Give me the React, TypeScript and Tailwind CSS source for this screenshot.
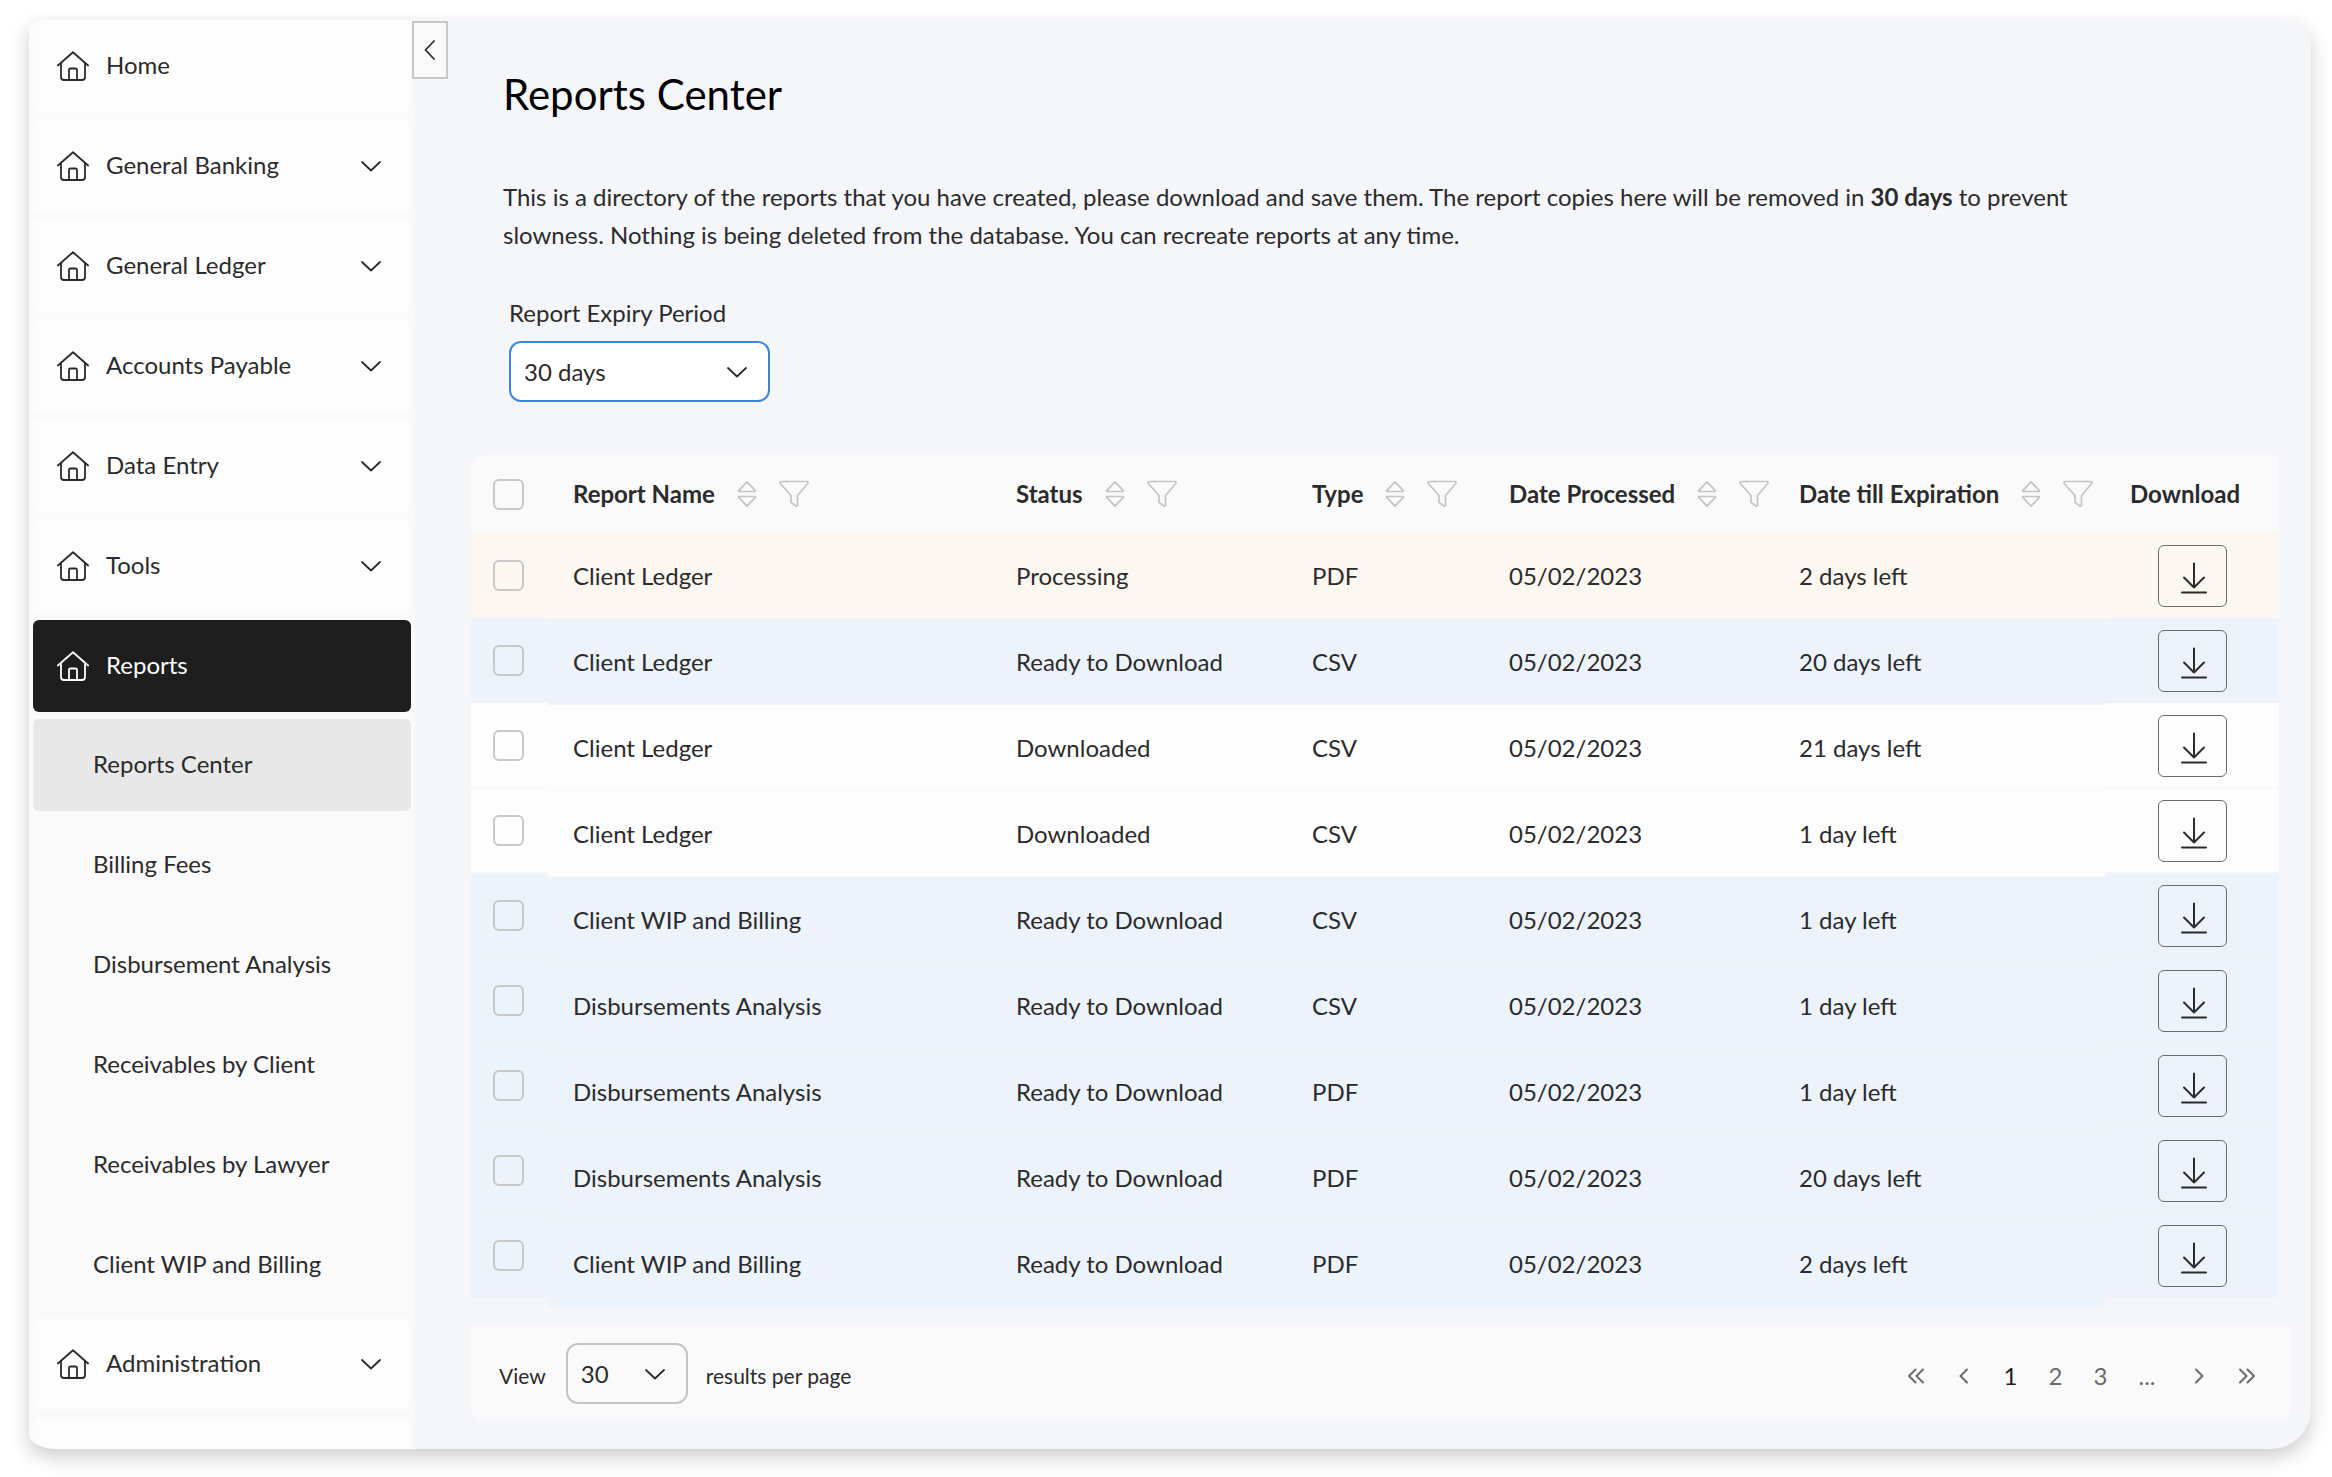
import React from "react";

const HomeIcon = () => (
  <svg className="h-8 w-8 shrink-0" viewBox="0 0 32 32" fill="none" stroke="currentColor" strokeWidth="1.8" strokeLinecap="round" strokeLinejoin="round" aria-hidden="true">
    <path d="M0.9 15.5 16 2.200 31.100 15.500" />
    <path d="M4 13V27a3 3 0 0 0 3 3h18a3 3 0 0 0 3-3V13" />
    <path d="M12 30V20a1.500 1.500 0 0 1 1.500-1.500h5A1.500 1.500 0 0 1 20 20v10" />
  </svg>
);

const ChevronDown = ({ className = "" }: { className?: string }) => (
  <svg className={"h-5 w-5 shrink-0 " + className} viewBox="0 0 20 20" fill="none" stroke="currentColor" strokeWidth="1.8" strokeLinecap="round" strokeLinejoin="round" aria-hidden="true">
    <path d="M1 6l9 8.500L19 6" />
  </svg>
);

const SortIcon = () => (
  <svg className="h-7 w-5" viewBox="0 0 20 28" fill="none" stroke="currentColor" strokeWidth="1.700" strokeLinejoin="round" aria-hidden="true">
    <path d="M10 1.800 18.300 10.600q.4.9-.6.9H2.300q-1 0-.6-.9z" />
    <path d="M10 26.200 18.300 17.400q.4-.9-.6-.9H2.300q-1 0-.6.9z" />
  </svg>
);

const FilterIcon = () => (
  <svg className="h-7 w-[30px]" viewBox="0 0 30 28" fill="none" stroke="currentColor" strokeWidth="1.700" strokeLinejoin="round" aria-hidden="true">
    <path d="M2 1.500h26q1.600.6.600 2.300L18.500 15.500V25q-.3 1.500-1.800.900l-4-3q-.7-.6-.7-1.400v-6L1.400 3.800Q.400 2.100 2 1.500z" />
  </svg>
);

const DownloadIcon = () => (
  <svg className="h-8 w-7" viewBox="0 0 28 32" fill="none" stroke="currentColor" strokeWidth="2" strokeLinecap="round" strokeLinejoin="round" aria-hidden="true">
    <path d="M14 1.500v24M4 15.500l10 10 10-10M2 30.500h24" />
  </svg>
);

const topItems = [
  { label: "General Banking" },
  { label: "General Ledger" },
  { label: "Accounts Payable" },
  { label: "Data Entry" },
  { label: "Tools" },
];

const subItems = ["Reports Center", "Billing Fees", "Disbursement Analysis", "Receivables by Client", "Receivables by Lawyer", "Client WIP and Billing"];

const NavItem = ({ label, chevron, active }: { label: string; chevron?: boolean; active?: boolean }) => (
  <li>
    <button type="button" className={"flex h-[92px] w-full items-center rounded-md pr-[30px] pl-6 text-left " + (active ? "bg-[#1e1e1e] text-white" : "bg-[#fdfdfd]")}>
      <HomeIcon />
      <span className="ml-[17px] flex-1 pb-0.5">{label}</span>
      {chevron && <ChevronDown />}
    </button>
  </li>
);

const rows = [
  ["Client Ledger", "Processing", "PDF", "05/02/2023", "2 days left"],
  ["Client Ledger", "Ready to Download", "CSV", "05/02/2023", "20 days left"],
  ["Client Ledger", "Downloaded", "CSV", "05/02/2023", "21 days left"],
  ["Client Ledger", "Downloaded", "CSV", "05/02/2023", "1 day left"],
  ["Client WIP and Billing", "Ready to Download", "CSV", "05/02/2023", "1 day left"],
  ["Disbursements Analysis", "Ready to Download", "CSV", "05/02/2023", "1 day left"],
  ["Disbursements Analysis", "Ready to Download", "PDF", "05/02/2023", "1 day left"],
  ["Disbursements Analysis", "Ready to Download", "PDF", "05/02/2023", "20 days left"],
  ["Client WIP and Billing", "Ready to Download", "PDF", "05/02/2023", "2 days left"],
];

const rowTone: Record<string, string> = {
  Processing: "bg-[#fcf7f0] shadow-[inset_0_-1px_0_#f5f6f9]",
  "Ready to Download": "bg-[#ecf3fb] shadow-[inset_0_-1px_0_#f0f4fa]",
  Downloaded: "bg-[#fdfdfd] shadow-[inset_0_-1px_0_#f6f7f9]",
};

const columns = [
  { label: "Report Name", width: "w-[468px]", pad: "pl-[25px]" },
  { label: "Status", width: "w-[296px]", pad: "" },
  { label: "Type", width: "w-[197px]", pad: "" },
  { label: "Date Processed", width: "w-[290px]", pad: "" },
  { label: "Date till Expiration", width: "", pad: "" },
];

const CheckBox = ({ label }: { label: string }) => (
  <input type="checkbox" aria-label={label} className="ml-[22px] block h-[31px] w-[31px] appearance-none rounded-md border-2 border-[#c8c8c8] bg-transparent checked:bg-[#1e1e1e]" />
);

const ReportsTable = () => (
  <div className="mt-[53px] mr-8 flex items-start overflow-hidden rounded-tl-xl">
    <table className="w-[77px] table-fixed border-collapse">
      <thead>
        <tr className="h-[78px] bg-[#fafafa]">
          <th scope="col"><CheckBox label="Select all reports" /></th>
        </tr>
      </thead>
      <tbody>
        {rows.map((r, i) => (
          <tr key={i} className={"h-[85px] " + rowTone[r[1]]}>
            <td><CheckBox label={`Select ${r[0]}, row ${i + 1}`} /></td>
          </tr>
        ))}
      </tbody>
    </table>
    <table className="min-w-0 flex-1 table-fixed border-collapse">
      <thead>
        <tr className="h-[78px] bg-[#fafafa]">
          {columns.map((c) => (
            <th key={c.label} scope="col" className={"text-left font-bold whitespace-nowrap " + c.width + " " + c.pad}>
              <span className="flex items-center">
                {c.label}
                <button type="button" aria-label={`Sort by ${c.label}`} className="ml-[22px] text-[#c4c4c4]"><SortIcon /></button>
                <button type="button" aria-label={`Filter ${c.label}`} className="ml-[22px] text-[#c4c4c4]"><FilterIcon /></button>
              </span>
            </th>
          ))}
        </tr>
      </thead>
      <tbody>
        {rows.map((r, i) => (
          <tr key={i} className={"h-[86px] " + rowTone[r[1]]}>
            {r.map((cell, j) => (
              <td key={j} className={columns[j].pad}>{cell}</td>
            ))}
          </tr>
        ))}
      </tbody>
    </table>
    <table className="w-[174px] table-fixed border-collapse">
      <thead>
        <tr className="h-[78px] bg-[#fafafa]">
          <th scope="col" className="pl-[25px] text-left font-bold">Download</th>
        </tr>
      </thead>
      <tbody>
        {rows.map((r, i) => (
          <tr key={i} className={"h-[85px] " + rowTone[r[1]]}>
            <td className="pl-[53px]">
              <button type="button" aria-label={`Download ${r[0]}, row ${i + 1}`} className="flex h-[62px] w-[69px] items-center justify-center rounded-md border border-[#6b6b6b] pt-[5px] pl-[3px]">
                <DownloadIcon />
              </button>
            </td>
          </tr>
        ))}
      </tbody>
    </table>
  </div>
);

const Select = ({ id, options, className }: { id: string; options: string[]; className: string }) => (
  <span className="relative inline-flex items-center">
    <select id={id} className={"h-[61px] appearance-none rounded-xl " + className}>
      {options.map((o) => <option key={o}>{o}</option>)}
    </select>
    <ChevronDown className="pointer-events-none absolute right-[23px]" />
  </span>
);

const PageArrow = ({ label, d, className }: { label: string; d: string; className: string }) => (
  <button type="button" aria-label={label} className={className}>
    <svg className="h-4 w-4" viewBox="0 0 16 16" fill="none" stroke="currentColor" strokeWidth="2" strokeLinecap="round" strokeLinejoin="round" aria-hidden="true">
      <path d={d} />
    </svg>
  </button>
);

const Pagination = () => (
  <footer className="mr-5 mt-5 flex h-[93px] items-center rounded-b-xl bg-[#fafafa] pr-9 pl-7">
    <label htmlFor="page-size" className="pt-1 text-[21px]">View</label>
    <span className="ml-5 flex"><Select id="page-size" options={["30", "50", "100"]} className="w-[122px] border-2 border-[#c4c4c4] bg-transparent pl-[13px]" /></span>
    <span className="ml-[18px] pt-1 text-[21px]">results per page</span>
    <nav aria-label="Pagination" className="ml-auto flex items-center pt-1 text-[#6b6b6b]">
      <PageArrow label="First page" className="mr-8" d="M7.500 1.500 1 8l6.500 6.500M15 1.500 8.500 8l6.500 6.500" />
      <PageArrow label="Previous page" className="mr-4" d="M11 1.500 4.500 8l6.500 6.500" />
      <button type="button" aria-current="page" className="w-[45px] text-[#1e1e1e]">1</button>
      <button type="button" className="w-[45px]">2</button>
      <button type="button" className="w-[45px]">3</button>
      <span className="w-12 text-center">...</span>
      <PageArrow label="Next page" className="mr-8 ml-5" d="M5 1.500 11.500 8 5 14.500" />
      <PageArrow label="Last page" className="" d="M1 1.500 7.500 8 1 14.500M8.500 1.500 15 8l-6.500 6.500" />
    </nav>
  </footer>
);

export default function App() {
  return (
    <div className="flex min-h-screen bg-white pt-5 pr-[21px] pb-7 pl-[29px] font-['Lato',sans-serif] text-[24px] leading-[30px] text-[#2b2b2b]">
      <div className="flex flex-1 overflow-hidden rounded-tl-lg rounded-tr-3xl rounded-br-[40px] bg-[#f4f6fa] shadow-[0_8px_20px_rgba(0,0,0,0.2)] [border-bottom-left-radius:28px_15px]">
        <aside className="flex w-[386px] shrink-0 flex-col bg-[#fafafa] px-1">
          <ul className="flex flex-col gap-2">
            <NavItem label="Home" />
            {topItems.map((t) => <NavItem key={t.label} label={t.label} chevron />)}
            <NavItem label="Reports" active />
          </ul>
          <ul className="my-[7px] flex flex-col gap-2">
            {subItems.map((s, i) => (
              <li key={s}>
                <a href="#" className={"flex h-[92px] items-center rounded-md pb-0.5 pl-[60px] " + (i === 0 ? "bg-[#e8e8e8]" : "")}>{s}</a>
              </li>
            ))}
          </ul>
          <ul className="flex flex-1 flex-col gap-2">
            <NavItem label="Administration" chevron />
            <li className="flex-1 rounded-t-md bg-[#fdfdfd]" />
          </ul>
        </aside>
        <main className="relative min-w-0 flex-1 pl-14">
          <button type="button" aria-label="Collapse menu" className="absolute top-px -left-[3px] flex h-[58px] w-9 items-center justify-center border-2 border-[#c8c8c8] bg-[#fafafa]">
            <svg className="h-5 w-3" viewBox="0 0 12 20" fill="none" stroke="currentColor" strokeWidth="1.800" strokeLinecap="round" strokeLinejoin="round" aria-hidden="true">
              <path d="M10 1 1.500 10 10 19" />
            </svg>
          </button>
          <header className="pl-8">
            <h1 className="pt-[46px] text-[42px] leading-[56px] text-black">Reports Center</h1>
            <p className="mt-[56px] max-w-[1620px] leading-[38px]">
              This is a directory of the reports that you have created, please download and save them. The report copies here will be removed in <strong className="font-bold">30 days</strong> to prevent slowness. Nothing is being deleted from the database. You can recreate reports at any time.
            </p>
            <div className="mt-[44px] flex flex-col items-start gap-[13px] pl-1.5">
              <label htmlFor="expiry">Report Expiry Period</label>
              <Select id="expiry" options={["30 days", "60 days", "90 days"]} className="w-[261px] border-2 border-[#3b86dc] bg-white pl-[13px]" />
            </div>
          </header>
          <ReportsTable />
          <Pagination />
        </main>
      </div>
    </div>
  );
}
